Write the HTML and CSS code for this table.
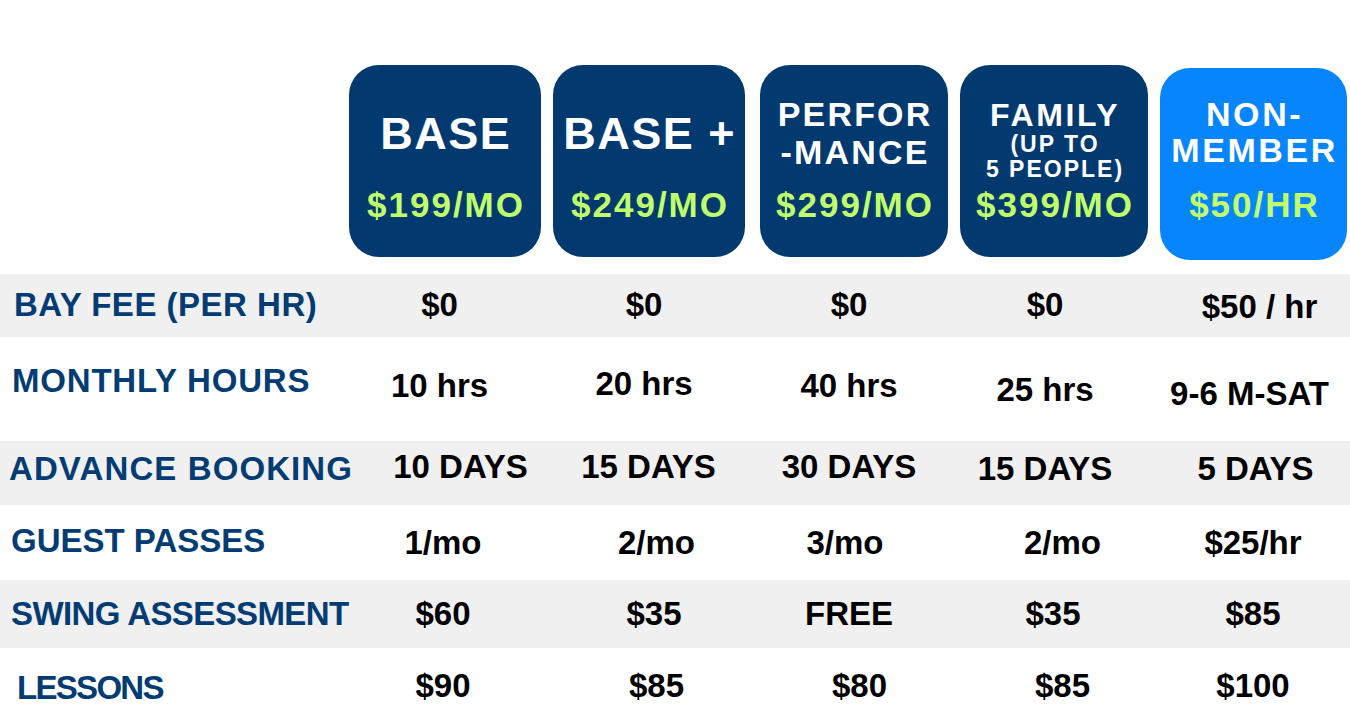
FILE: index.html
```html
<!DOCTYPE html>
<html lang="en">
<head>
<meta charset="utf-8">
<title>Membership Pricing</title>
<link rel="stylesheet" href="styles.css">
</head>
<body>
<main class="page">
  <header class="cards">
    <div class="card">
      <div class="title t-base"><span class="big">BASE</span></div>
      <div class="price">$199/MO</div>
    </div>
    <div class="card gap-wide">
      <div class="title t-base"><span class="big">BASE +</span></div>
      <div class="price">$249/MO</div>
    </div>
    <div class="card narrow">
      <div class="title t-perf"><span class="mid">PERFOR</span><span class="mid">-MANCE</span></div>
      <div class="price">$299/MO</div>
    </div>
    <div class="card narrow">
      <div class="title t-fam"><span class="mid fam">FAMILY</span><span class="small">(UP TO</span><span class="small">5 PEOPLE)</span></div>
      <div class="price">$399/MO</div>
    </div>
    <div class="card narrow light">
      <div class="title t-non"><span class="mid tight">NON-</span><span class="mid tight">MEMBER</span></div>
      <div class="price">$50/HR</div>
    </div>
  </header>

  <section class="table">
    <div class="row row-bay shade">
      <div class="label lp14 ls-bay">BAY FEE (PER HR)</div>
      <div class="val nl3">$0</div>
      <div class="val nl2">$0</div>
      <div class="val">$0</div>
      <div class="val">$0</div>
      <div class="val nr6 d2">$50 / hr</div>
    </div>
    <div class="row row-hours">
      <div class="label lp12 ls-mon u5">MONTHLY HOURS</div>
      <div class="val nl3">10 hrs</div>
      <div class="val nl2 u2">20 hrs</div>
      <div class="val">40 hrs</div>
      <div class="val d4">25 hrs</div>
      <div class="val nl3 d8">9-6 M-SAT</div>
    </div>
    <div class="row row-book shade">
      <div class="label lp9 ls-adv d2">ADVANCE BOOKING</div>
      <div class="val nr17">10 DAYS</div>
      <div class="val nr2">15 DAYS</div>
      <div class="val">30 DAYS</div>
      <div class="val d2">15 DAYS</div>
      <div class="val nr2 d2">5 DAYS</div>
    </div>
    <div class="row row-guest">
      <div class="label lp11 u2">GUEST PASSES</div>
      <div class="val">1/mo</div>
      <div class="val nr10">2/mo</div>
      <div class="val nl4">3/mo</div>
      <div class="val nr17">2/mo</div>
      <div class="val">$25/hr</div>
    </div>
    <div class="row row-swing shade">
      <div class="label lp11 ls-swing">SWING ASSESSMENT</div>
      <div class="val">$60</div>
      <div class="val nr8">$35</div>
      <div class="val">FREE</div>
      <div class="val nr8">$35</div>
      <div class="val">$85</div>
    </div>
    <div class="row row-lessons">
      <div class="label lp17 ls-less d2">LESSONS</div>
      <div class="val">$90</div>
      <div class="val nr10">$85</div>
      <div class="val nr10">$80</div>
      <div class="val nr17">$85</div>
      <div class="val">$100</div>
    </div>
  </section>
</main>
</body>
</html>
```

FILE: styles.css
```css
html, body {
  margin: 0;
  padding: 0;
  background: #ffffff;
}

body {
  font-family: "Liberation Sans", Arial, sans-serif;
  font-weight: 700;
  overflow: hidden;
}

.page {
  width: 1350px;
  height: 721px;
  overflow: hidden;
}

/* ---------- header cards ---------- */
.cards {
  box-sizing: border-box;
  height: 274px;
  padding: 65px 0 0 349px;
  display: flex;
  align-items: flex-start;
  gap: 12px;
}

.card {
  box-sizing: border-box;
  width: 192px;
  height: 192px;
  border-radius: 30px;
  background: #023a70;
  color: #ffffff;
  display: flex;
  flex-direction: column;
  align-items: center;
  padding-bottom: 32px;
}

.card.gap-wide { margin-right: 3px; }
.card.narrow { width: 188px; }
.card.light {
  width: 187px;
  margin-top: 3px;
  background: #0785fc;
  padding-bottom: 35px;
}

.title {
  display: flex;
  flex-direction: column;
  align-items: center;
  white-space: nowrap;
}

.t-base { padding-top: 44px; }
.t-perf { padding-top: 30px; }
.t-fam  { padding-top: 34px; }
.t-non  { padding-top: 28px; }

.big {
  font-size: 45px;
  line-height: 50px;
  letter-spacing: 1.5px;
  padding-left: 1.5px;
}

.mid {
  font-size: 34px;
  line-height: 38px;
  letter-spacing: 2.2px;
  padding-left: 2.2px;
}

.mid.fam { font-size: 32px; line-height: 33px; letter-spacing: 2.6px; }
.mid.tight { line-height: 36px; letter-spacing: 2.6px; }

.small {
  font-size: 23px;
  line-height: 24.5px;
  letter-spacing: 2px;
  padding-left: 2px;
}

.price {
  margin-top: auto;
  font-size: 35px;
  line-height: 40px;
  letter-spacing: 2px;
  padding-left: 2px;
  color: #c0ff6b;
  white-space: nowrap;
}

/* ---------- table ---------- */
.table {
  width: 1350px;
  overflow: hidden;
}

.row {
  box-sizing: border-box;
  width: 1365px;
  display: grid;
  grid-template-columns: 343px 200px 206px 200px 192px 224px;
  align-items: start;
  font-size: 33px;
  line-height: 33px;
  color: #000000;
}

.row.shade { background: #f0f0f0; }

.row-bay     { height: 63px;  padding-top: 14px; }
.row-hours   { height: 104px; padding-top: 32px; }
.row-book    { height: 64px;  padding-top: 9px; }
.row-guest   { height: 75px;  padding-top: 21px; }
.row-swing   { height: 68px;  padding-top: 17px; }
.row-lessons { height: 73px;  padding-top: 21px; }

.label {
  color: #033c73;
  white-space: nowrap;
}

.lp9  { padding-left: 9px; }
.lp11 { padding-left: 11px; }
.lp12 { padding-left: 12px; }
.lp14 { padding-left: 14px; }
.lp17 { padding-left: 17px; }

.ls-bay   { letter-spacing: 0.5px; }
.ls-mon   { letter-spacing: 0.8px; }
.ls-adv   { letter-spacing: 1.1px; }
.ls-swing { letter-spacing: -0.6px; }
.ls-less  { letter-spacing: -1.7px; }

.val {
  display: flex;
  justify-content: center;
  white-space: nowrap;
}

/* horizontal nudges (shift centre by half the padding) */
.nl2  { padding-right: 4px; }
.nl3  { padding-right: 7px; }
.nl4  { padding-right: 8px; }
.nr2  { padding-left: 5px; }
.nr6  { padding-left: 13px; }
.nr8  { padding-left: 16px; }
.nr10 { padding-left: 21px; }
.nr17 { padding-left: 35px; }

/* vertical nudges */
.u2 { margin-top: -2px; }
.u5 { margin-top: -5px; }
.d2 { margin-top: 2px; }
.d4 { margin-top: 4px; }
.d8 { margin-top: 8px; }
```
